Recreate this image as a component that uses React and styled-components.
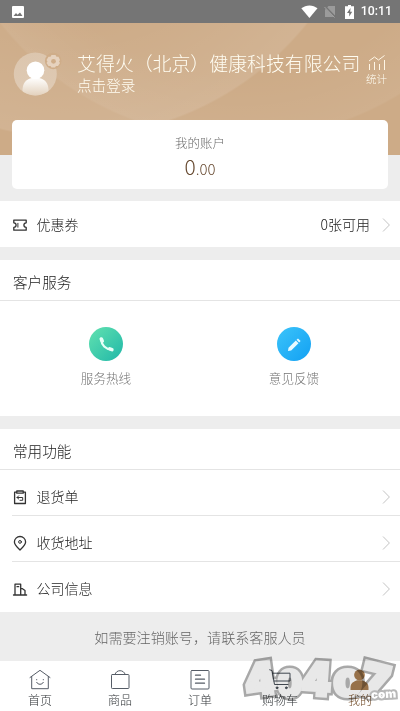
import React from 'react'
import styled, { createGlobalStyle } from 'styled-components'

const GlobalStyle=createGlobalStyle`
    *{
        box-sizing:border-box;
    }
    body{
        margin:0;
        font-family:"Noto Sans CJK SC",sans-serif;
        font-weight:300;
        color:#222;
        background:#ededed;
    }
    svg{
        display:block;
        flex-shrink:0;
    }
`
const Container=styled.div`
    width:400px;
    height:711px;
    display:flex;
    flex-direction:column;
    overflow:hidden;
    position:relative;
`
const StatusBar=styled.div`
    height:23px;
    flex-shrink:0;
    background:#757575;
    display:flex;
    align-items:center;
    padding:0 8px 0 12px;
`
const StatusRight=styled.div`
    display:flex;
    align-items:center;
    margin-left:auto;
`
const Clock=styled.span`
    font-family:Roboto,sans-serif;
    font-size:12.3px;
    font-weight:500;
    line-height:23px;
    color:#fff;
    margin-left:7px;
`
const Header=styled.div`
    height:132px;
    flex-shrink:0;
    background:
        radial-gradient(circle at 70px -190px,transparent 180px,rgba(255,255,255,0.1) 303px,transparent 305px),
        radial-gradient(circle at 240px -190px,transparent 240px,rgba(255,255,255,0.06) 305px,transparent 307px),
        #cdab87;
    padding:27px 13px 0 12px;
    display:flex;
    align-items:flex-start;
`
const User=styled.div`
    margin-left:15px;
    color:#fffdf2;
    white-space:nowrap;
`
const Company=styled.div`
    font-size:18.9px;
    line-height:25px;
`
const Login=styled.div`
    font-size:14.6px;
    line-height:20px;
`
const Stats=styled.div`
    margin:4px 0 0 auto;
    display:flex;
    flex-direction:column;
    align-items:center;
    color:#fffdf2;
    font-size:10.5px;
    line-height:16px;
`
const Account=styled.div`
    height:69px;
    flex-shrink:0;
    margin:-35px 12px 12px;
    padding-top:13px;
    border-radius:5px;
    background:#fff;
    text-align:center;
`
const AccountLabel=styled.div`
    font-size:12.5px;
    line-height:20px;
    color:#6c6c6c;
`
const Amount=styled.div`
    font-size:21px;
    line-height:26px;
    font-weight:300;
    color:#684b32;
    small{
        font-size:15px;
    }
`
const Panel=styled.div`
    background:#fff;
    flex-shrink:0;
    margin-bottom:${props=>props.$gap||0}px;
`
const PanelTitle=styled.div`
    height:${props=>props.$height}px;
    border-bottom:1px solid #e4e4e4;
    padding:${props=>props.$top}px 13px 0;
    font-size:14.6px;
    line-height:24px;
`
const Row=styled.div`
    height:${props=>props.$height}px;
    margin-left:12px;
    padding:${props=>props.$top||0}px 10px 0 0;
    border-bottom:${props=>props.$line?'1px solid #e4e4e4':'none'};
    display:flex;
    align-items:center;
    font-size:14px;
`
const RowLabel=styled.span`
    margin-left:7.5px;
    padding-bottom:2px;
`
const RowValue=styled.span`
    margin-left:auto;
    margin-right:12px;
    padding-bottom:2px;
    color:#222;
`
const Spacer=styled.span`
    flex:1;
`
const Services=styled.div`
    height:115px;
    padding:26px 12px 0;
    display:grid;
    grid-template-columns:1fr 1fr;
`
const Service=styled.div`
    display:flex;
    flex-direction:column;
    align-items:center;
    font-size:12.6px;
    line-height:20px;
    color:#747474;
`
const Round=styled.div`
    width:34px;
    height:34px;
    border-radius:50%;
    margin-bottom:7px;
    background:${props=>props.$fill};
    display:flex;
    align-items:center;
    justify-content:center;
`
const Note=styled.div`
    height:49px;
    flex-shrink:0;
    padding-top:1px;
    text-align:center;
    font-size:14.1px;
    line-height:48px;
    color:#666;
`
const TabBar=styled.div`
    height:51px;
    flex-shrink:0;
    background:#fff;
    display:grid;
    grid-template-columns:repeat(5,1fr);
`
const Tab=styled.div`
    display:flex;
    flex-direction:column;
    align-items:center;
    padding-top:8px;
    font-size:12px;
    line-height:18px;
    color:${props=>props.$active?'#6e4824':'#2f3336'};
`
const Watermark=styled.svg`
    position:absolute;
    left:236px;
    bottom:0;
    pointer-events:none;
    mix-blend-mode:multiply;
`

const line={ fill:'none', stroke:'#333', strokeWidth:1.3, strokeLinejoin:'round', strokeLinecap:'round' }
const thin={ fill:'none', stroke:'#555c66', strokeWidth:1, strokeLinejoin:'round', strokeLinecap:'round' }

const Arrow=()=>(
    <svg width="8" height="14" viewBox="0 0 8 14" fill="none" stroke="#c4c4c4" strokeWidth="1">
        <path d="M1 0.5L7.4 7L1 13.5"/>
    </svg>
)

const Avatar=()=>(
    <svg width="50" height="46" viewBox="0 0 50 46">
        <defs>
            <linearGradient id="face" x1="0" y1="0" x2="0" y2="1">
                <stop offset="0" stopColor="#dcc6ae"/>
                <stop offset="1" stopColor="#dfcab4"/>
            </linearGradient>
            <linearGradient id="body" x1="0" y1="0" x2="0" y2="1">
                <stop offset="0" stopColor="#fff"/>
                <stop offset="1" stopColor="#e2d0bb"/>
            </linearGradient>
            <clipPath id="disc"><circle cx="23.3" cy="24" r="21.5"/></clipPath>
        </defs>
        <circle cx="23.3" cy="24" r="21.5" fill="url(#face)"/>
        <path clipPath="url(#disc)" d="M10.5 46V39C11 31 17 27.5 23.5 27.5S36 31 36.5 39V46Z" fill="url(#body)"/>
        <circle cx="23.5" cy="20.3" r="8.8" fill="#fff"/>
        <circle cx="41.2" cy="11" r="8.3" fill="#cfad89"/>
        <path d="M39.5 5h4l1 1.8h2L48 10l-1 1.5 1 1.6-2 3h-2l-1 1.4h-3.5l-1-1.4h-2l-2-3 1-1.6-1-1.5 2-3.2h2z" fill="#e6d2be"/>
        <circle cx="41.5" cy="11.3" r="2.4" fill="#cfad89"/>
    </svg>
)

const ticket=(
    <svg width="17" height="16" viewBox="0 0 17 16" {...line}>
        <path d="M1.8 3.1H14.2V5.8A2.3 2.3 0 0 0 14.2 10.4V13.2H1.8V10.4A2.3 2.3 0 0 0 1.8 5.8Z"/>
        <path d="M5.9 6.3V10.2" strokeWidth="1"/>
    </svg>
)
const rows=[
    { label:'退货单', height:46, top:9, icon:(
        <svg width="17" height="16" viewBox="0 0 17 16" {...line}>
            <path d="M4.5 3.2H2.6V14.5H13.4V3.2H11.5M4.8 2H11.2V4.2H4.8Z"/>
            <path d="M6.7 6.8L5 8.5L6.7 10M5 8.5H10.7V11.3H8" strokeWidth="1"/>
        </svg>
    ) },
    { label:'收货地址', height:46, top:9, icon:(
        <svg width="17" height="16" viewBox="0 0 17 16" {...line}>
            <path d="M8 15C5 12 2.4 9.8 2.4 7A5.6 5.5 0 0 1 13.6 7C13.6 9.8 11 12 8 15Z"/>
            <circle cx="8" cy="6.9" r="1.4" strokeWidth="1"/>
        </svg>
    ) },
    { label:'公司信息', height:50, top:4, icon:(
        <svg width="17" height="16" viewBox="0 0 17 16" {...line}>
            <path d="M1.5 14H14.6M3 14V3.2H8.7V14M8.7 7.7H10.5L13 9.5V14M5 5.7H6.7"/>
        </svg>
    ) },
]
const tabs=[
    { label:'首页', icon:(
        <svg width="22" height="22" viewBox="0 0 22 22" {...thin}>
            <path d="M1 8.5L11 1.3L21 8.5M2.7 7.5V19.7H19.3V7.5"/>
            <path d="M7.7 13.4C9 16 13 16 14.3 13.4M7.5 10.7h.3M14.2 10.7h.3"/>
        </svg>
    ) },
    { label:'商品', icon:(
        <svg width="22" height="22" viewBox="0 0 22 22" {...thin}>
            <rect x="2.5" y="5.5" width="17.5" height="14" rx="0.8"/>
            <path d="M6 5.5C7 0.3 15 0.3 16.2 5.5"/>
        </svg>
    ) },
    { label:'订单', icon:(
        <svg width="22" height="22" viewBox="0 0 22 22" {...thin}>
            <rect x="2" y="1.5" width="18" height="18.5" rx="1"/>
            <path d="M6.5 6.2H11.5M6.5 10.2H15.5M6.5 14.2H15.5" strokeWidth="1.3"/>
        </svg>
    ) },
    { label:'购物车', icon:(
        <svg width="22" height="22" viewBox="0 0 22 22" {...thin} stroke="#454d56">
            <path d="M0.7 0.8L3 1.5L5.5 15.5H19M3.7 4.2H21V12H5"/>
            <circle cx="8" cy="18.8" r="0.9" fill="#454d56"/>
            <circle cx="17.3" cy="18.8" r="0.9" fill="#454d56"/>
        </svg>
    ) },
    { label:'我的', active:true, icon:(
        <svg width="22" height="22" viewBox="0 0 22 22" fill="#a67c50">
            <circle cx="10.5" cy="6" r="5.4"/>
            <path d="M1.5 21V18.5C1.5 13.8 5 12.5 8 11.2H13C16.5 12.5 19.5 13.8 19.5 18.5V21Z"/>
        </svg>
    ) },
]
// big logo characters: x, baseline, rotation, horizontal stretch
const marks=[
    { t:'4', x:11, y:66, r:-8, s:1, size:44 },
    { t:'0', x:42, y:65, r:0, s:0.95, size:35 },
    { t:'4', x:65, y:63, r:4, s:0.92, size:45 },
    { t:'0', x:98, y:65, r:0, s:1.1, size:35 },
    { t:'7', x:122, y:62, r:14, s:1, size:45 },
]

function App() {
    return (
        <Container>
            <GlobalStyle/>
            <StatusBar>
                <svg width="12" height="12" viewBox="0 0 12 12">
                    <rect width="12" height="12" rx="1" fill="#fff"/>
                    <path d="M1.5 10L4 7L5.5 8.8L8 6.5L10.5 10Z" fill="#757575"/>
                </svg>
                <StatusRight>
                    <svg width="17" height="13" viewBox="0 0 17 13">
                        <path d="M0.3 3.3C5 -0.6 12 -0.6 16.5 3.3L8.4 13Z" fill="#fff"/>
                    </svg>
                    <svg width="12" height="13" viewBox="0 0 12 13" style={{ marginLeft:6 }}>
                        <path d="M4.5 1H11V12H1V4.5Z" fill="#9b9b9b"/>
                        <path d="M0.5 1L11.5 12.5" stroke="#757575" strokeWidth="2"/>
                        <path d="M0.5 2L10.5 12.5" stroke="#a5a5a5"/>
                    </svg>
                    <svg width="9" height="14" viewBox="0 0 9 14" style={{ marginLeft:9 }}>
                        <path d="M3 0H6V1.3H9V14H0V1.3H3Z" fill="#fff"/>
                        <path d="M5.5 3L2 8H4.2V11.5L7.2 6.7H5.2Z" fill="#757575"/>
                    </svg>
                    <Clock>10:11</Clock>
                </StatusRight>
            </StatusBar>
            <Header>
                <Avatar/>
                <User>
                    <Company>艾得火（北京）健康科技有限公司</Company>
                    <Login>点击登录</Login>
                </User>
                <Stats>
                    <svg width="18" height="17" viewBox="0 0 18 17" fill="none" stroke="#fff6e6">
                        <path d="M1.5 16V10M6.5 16V8M11.5 16V10M16.5 16V6M1 7L6.5 3L10.5 6L16.5 1.5"/>
                    </svg>
                    统计
                </Stats>
            </Header>
            <Account>
                <AccountLabel>我的账户</AccountLabel>
                <Amount>0<small>.00</small></Amount>
            </Account>
            <Panel $gap={13}>
                <Row $height={46} $top={1}>
                    {ticket}
                    <RowLabel>优惠券</RowLabel>
                    <RowValue>0张可用</RowValue>
                    <Arrow/>
                </Row>
            </Panel>
            <Panel $gap={13}>
                <PanelTitle $height={41} $top={10}>客户服务</PanelTitle>
                <Services>
                    <Service>
                        <Round $fill="linear-gradient(135deg,#62e2b0,#20b7a8)">
                            <svg width="17" height="17" viewBox="0 0 17 17" fill="none" stroke="#e8fff8" strokeLinecap="round">
                                <path d="M3.2 3.5C3.5 9 7.5 13.2 13.5 13.5" strokeWidth="2.2"/>
                                <path d="M3.3 3L4.2 5M11.8 12.9L13.9 13.6" strokeWidth="3.6"/>
                            </svg>
                        </Round>
                        服务热线
                    </Service>
                    <Service>
                        <Round $fill="linear-gradient(135deg,#3cc4fa,#12a0f3)">
                            <svg width="17" height="17" viewBox="0 0 17 17" fill="#e9faff">
                                <path d="M2 15L2.5 11.8L9.8 4.5L12.5 7.2L5.2 14.5ZM10.5 3.8L12 2.4L14.6 5L13.2 6.5Z"/>
                            </svg>
                        </Round>
                        意见反馈
                    </Service>
                </Services>
            </Panel>
            <Panel>
                <PanelTitle $height={41} $top={10}>常用功能</PanelTitle>
                {rows.map(row=>(
                    <Row key={row.label} $height={row.height} $top={row.top} $line={row.height===46}>
                        {row.icon}
                        <RowLabel>{row.label}</RowLabel>
                        <Spacer/>
                        <Arrow/>
                    </Row>
                ))}
            </Panel>
            <Note>如需要注销账号，请联系客服人员</Note>
            <TabBar>
                {tabs.map(tab=>(
                    <Tab key={tab.label} $active={tab.active}>
                        {tab.icon}
                        {tab.label}
                    </Tab>
                ))}
            </TabBar>
            <Watermark width="164" height="80" viewBox="0 0 164 80" fontFamily="Inter" fontWeight="900" strokeLinejoin="miter">
                {[0,1].map(layer=>marks.map((m,i)=>(
                    <text
                        key={layer+'-'+i}
                        transform={`translate(${m.x} ${m.y}) rotate(${m.r}) scale(${m.s} 1)`}
                        fontSize={m.size}
                        fill={layer?'#e8e8e8':'#a8a8a8'}
                        stroke={layer?'#e8e8e8':'#a8a8a8'}
                        strokeWidth={layer?4:9}
                    >{m.t}</text>
                )))}
                <text x="131" y="68" fontSize="11.5" fill="#fff" stroke="#b8b8b8" strokeWidth="4" paintOrder="stroke" transform="rotate(-3 131 68)">.com</text>
            </Watermark>
        </Container>
    )
}

export default App
